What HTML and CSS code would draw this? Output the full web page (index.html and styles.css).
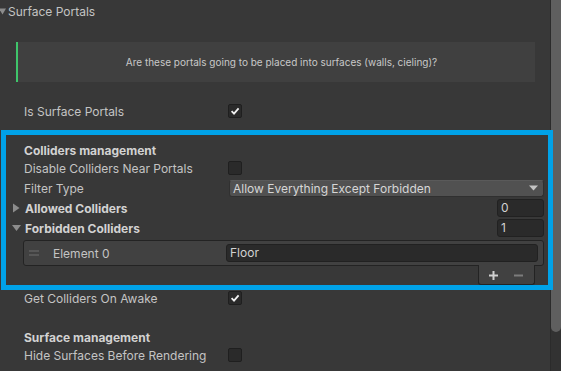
FILE: index.html
```html
<!DOCTYPE html>
<html>
<head>
    <link rel="stylesheet" href="styles.css">
</head>
<body>
    <div class="window">
        <div class="inspector">
            <!-- Foldout header -->
            <div class="foldout-header">
                <svg class="arrow-top" width="7" height="7" viewBox="0 0 7 7"><polygon points="0,0.5 7,0.5 3.5,6.5" fill="#8c8c8c"/></svg>
                <span>Surface Portals</span>
            </div>

            <div class="helpbox">Are these portals going to be placed into surfaces (walls, cieling)?</div>

            <div class="row gap-help">
                <div class="label">Is Surface Portals</div>
                <div class="check on"><svg width="12" height="12" viewBox="0 0 12 12"><path d="M2.6 6.2 L5 8.6 L9.6 3.4" fill="none" stroke="#f0f0f0" stroke-width="1.8"/></svg></div>
            </div>

            <!-- Colliders -->
            <div class="row header gap-section">Colliders management</div>
            <div class="row">
                <div class="label">Disable Colliders Near Portals</div>
                <div class="check"></div>
            </div>
            <div class="row spaced">
                <div class="label">Filter Type</div>
                <div class="dropdown">
                    <span>Allow Everything Except Forbidden</span>
                    <svg width="9" height="6" viewBox="0 0 9 6"><polygon points="0,0.5 9,0.5 4.5,5.5" fill="#c4c4c4"/></svg>
                </div>
            </div>
            <div class="row spaced foldout">
                <svg class="arrow" width="13" height="10" viewBox="0 0 13 10"><polygon points="1,0.5 7.5,5 1,9.5" fill="#8c8c8c"/></svg>
                <span class="bold">Allowed Colliders</span>
                <div class="intfield">0</div>
            </div>
            <div class="row spaced foldout">
                <svg class="arrow" width="13" height="10" viewBox="0 0 13 10"><polygon points="0,2 9,2 4.5,8" fill="#8c8c8c"/></svg>
                <span class="bold">Forbidden Colliders</span>
                <div class="intfield">1</div>
            </div>

            <div class="list">
                <div class="element">
                    <svg class="handle" width="10" height="6" viewBox="0 0 10 6"><rect x="0" y="0.5" width="10" height="1" fill="#6f6f6f"/><rect x="0" y="4.5" width="10" height="1" fill="#6f6f6f"/></svg>
                    <span class="element-label">Element 0</span>
                    <div class="objfield">Floor</div>
                </div>
            </div>
            <div class="list-footer">
                <svg width="9" height="9" viewBox="0 0 9 9"><rect x="0" y="3.5" width="9" height="2" fill="#d0d0d0"/><rect x="3.5" y="0" width="2" height="9" fill="#d0d0d0"/></svg>
                <svg width="9" height="9" viewBox="0 0 9 9"><rect x="0" y="3.5" width="9" height="2" fill="#7c7c7c"/></svg>
            </div>

            <div class="row after-list">
                <div class="label">Get Colliders On Awake</div>
                <div class="check on"><svg width="12" height="12" viewBox="0 0 12 12"><path d="M2.6 6.2 L5 8.6 L9.6 3.4" fill="none" stroke="#f0f0f0" stroke-width="1.8"/></svg></div>
            </div>

            <!-- Surfaces -->
            <div class="row header gap-section">Surface management</div>
            <div class="row">
                <div class="label">Hide Surfaces Before Rendering</div>
                <div class="check"></div>
            </div>
        </div>
        <div class="scrollbar"><div class="thumb"></div></div>
    </div>

    <!-- highlight frame drawn over the inspector -->
    <div class="highlight"></div>
</body>
</html>
```

FILE: styles.css
```css
body {
    margin: 0;
    height: 371px;
    background: #383838;
    overflow: hidden;
    font-family: Inter, "Noto Sans", sans-serif;
    font-size: 12px;
    color: #c4c4c4;
}
.window {
    display: flex;
    height: 371px;
}
.inspector {
    flex: 1;
    padding-right: 6px;
}

/* Scrollbar */
.scrollbar {
    width: 10px;
    border-left: 1px solid #2b2b2b;
    background: #323232;
}
.thumb {
    height: 332px;
    background: #5f5f5f;
    border-radius: 0 0 5px 5px;
}

/* Header */
.foldout-header {
    height: 23px;
    display: flex;
    align-items: center;
    gap: 2px;
}
.arrow-top {
    margin-left: -1px;
}

/* Help box */
.helpbox {
    margin: 19px 9px 0 16px;
    height: 40px;
    box-sizing: border-box;
    border-left: 2px solid #3fc56b;
    background: #404040;
    display: flex;
    justify-content: center;
    align-items: center;
    padding-left: 10px;
    font-size: 10px;
    color: #c8c8c8;
}

/* Rows */
.row {
    display: flex;
    align-items: center;
    height: 18px;
    padding-left: 24px;
}
.row.gap-help { margin-top: 20px; }
.row.gap-section { margin-top: 22px; }
.row.spaced { margin-top: 2px; }
.row.after-list { margin-top: 4px; }
.row.header {
    height: 17px;
    font-weight: 700;
    color: #d2d2d2;
}
.label {
    width: 204px;
    flex: none;
}
.row.foldout {
    padding-left: 12px;
}
.arrow {
    flex: none;
}
.bold {
    font-weight: 700;
    color: #d2d2d2;
}

/* Controls */
.check {
    width: 14px;
    height: 14px;
    box-sizing: border-box;
    background: #2a2a2a;
    border: 1px solid #1f1f1f;
    border-radius: 2px;
    display: flex;
    align-items: center;
    justify-content: center;
}
.dropdown {
    flex: 1;
    margin-left: 1px;
    height: 17px;
    box-sizing: border-box;
    background: #515151;
    border: 1px solid #303030;
    border-top-color: #5a5a5a;
    border-radius: 3px;
    display: flex;
    align-items: center;
    justify-content: space-between;
    padding: 0 5px 0 3px;
    color: #d6d6d6;
}
.intfield {
    margin-left: auto;
    width: 47px;
    height: 18px;
    box-sizing: border-box;
    background: #2a2a2a;
    border: 1px solid #212121;
    border-radius: 3px;
    padding-left: 3px;
    line-height: 16px;
    color: #d2d2d2;
}

/* Reorderable list */
.list {
    margin: 3px 0 0 23px;
    height: 26px;
    box-sizing: border-box;
    background: #414141;
    border: 1px solid #232323;
    border-radius: 3px;
}
.element {
    display: flex;
    align-items: center;
    height: 18px;
    padding: 3px 5px 0 5px;
}
.handle {
    flex: none;
}
.element-label {
    margin-left: 14px;
    width: 173px;
    flex: none;
}
.objfield {
    flex: 1;
    height: 18px;
    box-sizing: border-box;
    background: #2a2a2a;
    border: 1px solid #212121;
    border-radius: 3px;
    padding-left: 3px;
    line-height: 16px;
    color: #d2d2d2;
}
.list-footer {
    margin: -1px 0 0 478px;
    width: 57px;
    height: 20px;
    box-sizing: border-box;
    background: #414141;
    border: 1px solid #232323;
    border-top: none;
    border-radius: 0 0 3px 3px;
    display: flex;
    align-items: center;
    gap: 16px;
    padding: 1px 0 0 10px;
}

/* Highlight frame */
.highlight {
    position: absolute;
    left: 1px;
    top: 130px;
    width: 552px;
    height: 160px;
    box-sizing: border-box;
    border: 5px solid #00a2e8;
    pointer-events: none;
}
```
